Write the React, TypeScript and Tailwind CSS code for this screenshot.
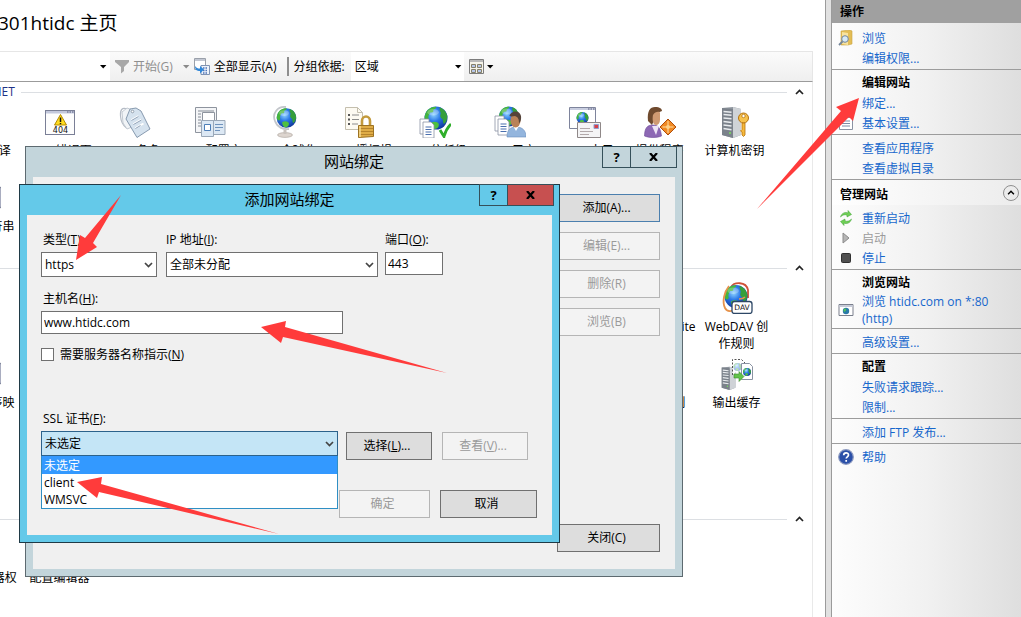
import { useId, type ReactNode } from "react";

function Caret({ muted }: { muted?: boolean }) {
  return (
    <svg className={muted ? "h-1 w-[7px] shrink-0 text-[#8a8a8a]" : "h-1 w-[7px] shrink-0 text-black"} viewBox="0 0 7 4">
      <path d="M0 0h6.4L3.2 3.6z" fill="currentColor" />
    </svg>
  );
}

function Chevron({ className, flip }: { className: string; flip?: boolean }) {
  return (
    <svg className={className} viewBox="0 0 9 6" fill="none" stroke="currentColor" strokeWidth="1.7">
      <path d={flip ? "M1 5 4.5 1.5 8 5" : "M1 1l3.5 3.5L8 1"} />
    </svg>
  );
}

/* ---------- feature icons, all on a 32 x 32 grid ---------- */

function Globe({ cx, cy, r }: { cx: number; cy: number; r: number }) {
  const id = useId();
  const k = r / 12;
  return (
    <g transform={`translate(${cx} ${cy}) scale(${k})`}>
      <defs>
        <radialGradient id={id} cx="0.4" cy="0.35" r="0.75">
          <stop offset="0" stopColor="#8fd4ff" />
          <stop offset="0.4" stopColor="#2b78e8" />
          <stop offset="1" stopColor="#0a2a8c" />
        </radialGradient>
      </defs>
      <circle r="12" fill={`url(#${id})`} />
      <path d="M-11.500-3C-10-9-5-12 0-11.800c1 2-2 2-3 4 1 2-1 2-3 2-1 2-2 3-2 5 1 2 0 4-2 4C-12 2-12.500-1-11.500-3z" fill="#45b53c" />
      <path d="M4-11c4 1 7 5 7.800 9 0 4-1 6-3 8-2 0-1-3-2-5-2-1-3-3-2-5 1-2-2-4-.8-7z" fill="#359f3b" />
      <path d="M-5 5c3-2 8-1 8 2s-2 4-4 4.500-5-4-4-6.500z" fill="#4fc03f" />
      <ellipse cx="-3" cy="-6" rx="6" ry="3.500" fill="#fff" opacity="0.25" />
    </g>
  );
}

function Pages({ x, y }: { x: number; y: number }) {
  return (
    <g transform={`translate(${x} ${y})`} stroke="#8a93a3" strokeWidth="0.8" fill="#fff">
      <path d="M0 0h9v15H0z" />
      <path d="M3 3h8l3 3v13H3z" />
      <path d="M5.500 8h6M5.500 10.500h6M5.500 13h6M5.500 15.500h6" stroke="#4a6fae" strokeWidth="1.200" />
    </g>
  );
}

function Server() {
  return (
    <g>
      <path d="M1 2 12 1l8 2v26l-8 3-11-3z" fill="#8f969e" />
      <path d="M12 1l8 2v26l-8 3z" fill="#cfd3d7" />
      <path d="M1 2l11 1v29L1 29z" fill="#7b828b" />
      <path d="M2.500 5.500l8 .7M2.500 8.500l8 .7M2.500 12l8 .8M2.500 15.500l8 1M2.500 19l8 1M2.500 22.500l8 1.200" stroke="#e9ecef" strokeWidth="1.400" />
      <circle cx="9" cy="27" r="1" fill="#79e05c" />
    </g>
  );
}

type IconName =
  | "blank" | "window" | "error" | "tags" | "pages" | "globeStand" | "lock" | "trust" | "user"
  | "mail" | "provider" | "key" | "dav" | "cache";

function FeatureIcon({ name }: { name: IconName }) {
  return (
    <svg className="h-8 w-8 shrink-0" viewBox="0 0 32 32" fill="none">
      {name === "window" && <rect x="4" y="5" width="28.500" height="21" rx="2" fill="#a9adc0" stroke="#7a7f96" />}
      {name === "error" && (
        <g>
          <rect x="1.500" y="4.500" width="29" height="24" fill="#fdfdfd" stroke="#7a7f96" />
          <path d="M2 5h28v2.500H2z" fill="#c3c8dc" />
          <path d="M23 6h1.500M25.500 6H27M28 6h1.500" stroke="#54597a" />
          <path d="M16.500 8.500 22.500 19h-12z" fill="#ffdc1f" stroke="#b58a00" strokeLinejoin="round" />
          <path d="M16.500 11.500V16M16.500 17v1.300" stroke="#111" strokeWidth="1.500" />
          <text x="16.500" y="27" textAnchor="middle" fontSize="8" fontFamily="DejaVu Sans" fill="#111">404</text>
        </g>
      )}
      {name === "tags" && (
        <g stroke="#8b97a6" strokeWidth="0.900">
          <path d="M8 3C3 1 1 4 1.500 10s3 10 6 12" fill="none" stroke="#b5bcc6" strokeWidth="1.200" />
          <path d="M3 6l5-4 9 3-4 16-5 2-4-6z" fill="#f1f4f7" stroke="#bcc4cd" />
          <path d="M11 3l6-1 5 3 9 18-13 8.500L7 13z" fill="#d5e2ee" stroke="#7c90a6" />
          <circle cx="13.500" cy="5.500" r="1.300" fill="#fff" />
          <path d="M12.500 14l7-4M14.500 18l8-4.500M16.500 22l8-4.500" stroke="#fff" strokeWidth="2" />
          <path d="M12.500 14.500l7-4M14.500 18.500l8-4.500M16.500 22.500l5-3" stroke="#6e86a3" strokeWidth="0.800" />
        </g>
      )}
      {name === "pages" && (
        <g stroke="#8e949e">
          <path d="M1.500 1.500h21v25h-21z" fill="#f4f5f7" />
          <path d="M4 5h16M4 8h3M4 11h3M4 14h3M4 17h3M4 20h3" strokeWidth="1.600" stroke="#a9aeb7" />
          <path d="M8.500 6.500h12v13h-12z" fill="#fff" />
          <path d="M7.500 14.500h12v16h-12zM19.500 14.500h11.500v14H19.500z" fill="#dce8f4" stroke="#9aa8b8" />
          <path d="M10.500 18.500h6v6h-6z" fill="#fff" stroke="#4d7fb8" />
          <path d="M21 18.500h8M21 21.500h8M21 24.500h5" stroke="#6f93bd" />
        </g>
      )}
      {name === "globeStand" && (
        <g>
          <path d="M17 1C8 0 3 8 6 15c2 6 8 9 14 8" stroke="#c3c6cb" strokeWidth="1.800" />
          <ellipse cx="16" cy="29" rx="7.500" ry="2.400" fill="#ddd5cf" stroke="#aaa19b" strokeWidth="0.600" />
          <path d="M14.500 24h3v4h-3z" fill="#c9c2bd" />
          <Globe cx={17.500} cy={12} r={9.800} />
        </g>
      )}
      {name === "lock" && (
        <g>
          <path d="M1.500 1.500h12l5 5v17h-17z" fill="#fdfaf2" stroke="#c4bfae" />
          <path d="M13.500 1.500v5h5" stroke="#c4bfae" />
          <path d="M4 9h2M4 13.500h2M4 18h2" stroke="#555" strokeWidth="2" />
          <path d="M8 9h7M8 13.500h7M8 18h6" stroke="#8c8c8c" />
          <path d="M18 20v-5a4 4.500 0 0 1 8 0v5" stroke="#c39a3c" strokeWidth="2.600" />
          <path d="M14.500 19.500h15v11l-15 1z" fill="#dfac45" stroke="#9c7222" />
          <path d="M15 22.500h14M15 25.500h14M15 28.500h14" stroke="#b5832b" />
          <path d="M16 20v11" stroke="#f8dc93" strokeWidth="1.500" />
        </g>
      )}
      {name === "trust" && (
        <g>
          <Globe cx={17} cy={12} r={11.500} />
          <Pages x={1} y={13} />
          <path d="M21 24l4 6.500Q27 23 32 18" stroke="#2fae2a" strokeWidth="2.800" />
        </g>
      )}
      {name === "user" && (
        <g>
          <Globe cx={15} cy={10.500} r={10} />
          <Pages x={1} y={10} />
          <path d="M13 31c0-7 3-10 9-10s10 3 10 10z" fill="#93b5dd" stroke="#6a8fbe" strokeWidth="0.600" />
          <path d="M19 20l3 5 3-5z" fill="#fff" />
          <ellipse cx="21.500" cy="14.500" rx="5" ry="7" fill="#b98258" />
          <path d="M15.500 10c1-5 10-7 11.500 0 .5 4-1 7-2 7 0-4-1-6-4-7-2 0-4 1-5.500 0z" fill="#55433a" />
        </g>
      )}
      {name === "mail" && (
        <g>
          <path d="M.5 1.500h26v21H.5z" fill="#fff" stroke="#7e849c" />
          <path d="M1 2h25v2H1z" fill="#c9cee0" />
          <path d="M19 3h1.500M21.500 3H23M24 3h1.500" stroke="#54597a" />
          <Globe cx={13.500} cy={12} r={6} />
          <path d="M8.500 16.500h23v15h-23z" fill="#f4f4f5" stroke="#8f8888" />
          <path d="M11 22.500h10M11 25.500h13M11 28.500h9" stroke="#b2a9aa" />
          <path d="M25 18.500h4.500v4H25z" fill="#d6414a" stroke="#8f9fd0" />
        </g>
      )}
      {name === "provider" && (
        <g>
          <path d="M.5 30c0-8 3-11 8-11 6 0 8 3 9 11-5 2-12 2-17 0z" fill="#8d68b4" stroke="#6f4c98" strokeWidth="0.600" />
          <path d="M8 20l4 9 3-9z" fill="#eee5f5" />
          <path d="M4 15C3 5 6 1 11 1s7 2 7 4l-5 2-5 12z" fill="#6f4a2e" />
          <path d="M9 9c2-4 7-4 7-2v7c0 3-2 5-4 5-3 0-4-5-3-10z" fill="#cf9a72" />
          <path d="M24 13l8 8-8 8-8-8z" fill="#f08a24" stroke="#b04d0c" />
          <path d="M24 15v12M18.500 21h11" stroke="#ffe0a8" />
          <circle cx="24" cy="21" r="2" fill="#ffd28a" />
        </g>
      )}
      {name === "key" && (
        <g transform="translate(2 0)">
          <Server />
          <circle cx="22.500" cy="12" r="5" fill="#f6c24d" stroke="#b5720f" />
          <circle cx="22.500" cy="10" r="1.700" fill="#fff" stroke="#b5720f" strokeWidth="0.800" />
          <path d="M21 17h3v12l-1.500 1.500L21 29v-3l-1.500-1 1.500-1.500z" fill="#f6b93b" stroke="#b5720f" strokeWidth="0.800" />
        </g>
      )}
      {name === "dav" && (
        <g>
          <path d="M10 5c3-5 15-6 17 3v8" stroke="#cf5138" strokeWidth="1.800" />
          <Globe cx={15} cy={14.500} r={11.500} />
          <path d="M8 4C3 10 1 20 4 26c2 4 7 4 11 1" stroke="#e6924b" strokeWidth="1.800" />
          <path d="M18 17c2 0 4 0 6-2" stroke="#e6924b" strokeWidth="1.500" />
          <rect x="11" y="19.500" width="20" height="12" rx="2.500" fill="#fff" stroke="#2d4766" strokeWidth="1.300" />
          <text x="21" y="28.300" textAnchor="middle" fontSize="7.500" fontFamily="DejaVu Sans" fill="#111">DAV</text>
        </g>
      )}
      {name === "cache" && (
        <g>
          <g transform="translate(0 8) scale(.72 .75)"><Server /></g>
          <path d="M11.500 17V1.500h9l4 4" fill="#fff" stroke="#555" strokeDasharray="2 1.500" />
          <g opacity="0.4"><Globe cx={16.500} cy={9} r={4} /></g>
          <path d="M20.500 5.500h8l3 3v13h-11z" fill="#fff" stroke="#8a93a3" />
          <Globe cx={26} cy={14} r={4} />
          <path d="M13 16h5v-2.500l5 5-5 5V20h-5z" fill="#63c34a" stroke="#3a8f2b" strokeWidth="0.600" />
        </g>
      )}
    </svg>
  );
}

/* ---------- main pane ---------- */

function Feature({ icon, children }: { icon: IconName; children: ReactNode }) {
  return (
    <li className="flex h-[76px] w-[75px] shrink-0 list-none flex-col items-center gap-1">
      <FeatureIcon name={icon} />
      <span className="w-[70px] text-center leading-[17px]">{children}</span>
    </li>
  );
}

function Group({ title, className, children }: { title: string; className: string; children: ReactNode }) {
  return (
    <section className={className}>
      <h2 className="-ml-8 flex h-5 items-center pr-2 text-[#1e3287]">
        <span className="leading-5">{title}</span>
        <span className="ml-1.5 mr-2 h-px flex-1 bg-[#dcdfe3]" />
        <button type="button" aria-label="折叠" className="text-[#222]">
          <Chevron flip className="h-1.5 w-[9px]" />
        </button>
      </h2>
      <div className="-ml-[53px] pt-1">{children}</div>
    </section>
  );
}

function FeatureRow({ children }: { children: ReactNode }) {
  return <ul className="flex">{children}</ul>;
}

/* ---------- dialogs ---------- */

function CaptionButtons({ danger }: { danger?: boolean }) {
  return (
    <div className="absolute -top-px right-[5px] flex h-[22px] text-[13px] font-bold text-black">
      <button type="button" aria-label="帮助" className="w-[29px] border border-[#35505a] leading-5">?</button>
      <button
        type="button"
        aria-label="关闭"
        className={
          danger
            ? "-ml-px flex w-[47px] items-center justify-center border border-[#35505a] bg-[#c75050]"
            : "-ml-px flex w-[47px] items-center justify-center border border-[#35505a]"
        }
      >
        <svg className="h-2 w-[9px]" viewBox="0 0 9 8" stroke="#000" strokeWidth="2.200"><path d="M1 0l7 8M8 0 1 8" /></svg>
      </button>
    </div>
  );
}

function Button({ className, disabled, focused, children }: { className: string; disabled?: boolean; focused?: boolean; children: ReactNode }) {
  const tone = disabled
    ? "border-[#b5b5b5] bg-[#f3f3f3] text-[#9a9a9a]"
    : focused
      ? "border-[#4b7fae] bg-[#dddddd] text-black"
      : "border-[#707070] bg-[#dddddd] text-black";
  return (
    <button type="button" disabled={disabled} className={`h-7 border pr-1 ${tone} ${className}`}>
      {children}
    </button>
  );
}

function Combo({ id, value, className, open }: { id: string; value: string; className: string; open?: boolean }) {
  return (
    <div className={`relative ${className}`}>
      <select
        id={id}
        defaultValue={value}
        className={
          open
            ? "h-[25px] w-full appearance-none border border-[#2c628b] bg-[#c4e5f6] pl-[3px] leading-[23px]"
            : "h-[25px] w-full appearance-none border border-[#707070] bg-white pl-[3px] leading-[23px]"
        }
      >
        <option>{value}</option>
      </select>
      <Chevron className="pointer-events-none absolute right-1 top-[10px] h-1.5 w-[9px] text-[#444]" />
    </div>
  );
}

/* ---------- actions pane ---------- */

type ActionIconName = "browse" | "basic" | "restart" | "start" | "stop" | "site" | "help";

function ActionIcon({ name }: { name: ActionIconName }) {
  return (
    <svg className="h-4 w-4" viewBox="0 0 16 16" fill="none">
      {name === "browse" && (
        <g>
          <path d="M3 1l9-1 2 1v13l-4 1H3z" fill="#e3bd55" stroke="#c9a445" strokeWidth="0.600" />
          <path d="M4 2l6 1v12l-6-1z" fill="#f7e3a0" />
          <circle cx="7" cy="9" r="3.300" fill="#d6eaf8" stroke="#74859a" />
          <path d="M4.500 11.500 1 15" stroke="#74859a" strokeWidth="1.800" />
        </g>
      )}
      {name === "basic" && (
        <g>
          <path d="M1.500 2.500h13v12h-13z" fill="#fff" stroke="#8a93a3" />
          <path d="M4 6h8M4 8.500h8M4 11h8" stroke="#7d8ca5" />
        </g>
      )}
      {name === "restart" && (
        <g fill="#6fcf55" stroke="#3fa036" strokeWidth="0.500">
          <path d="M2.500 7c1-4 5-5.500 7.500-4V.5L13.500 4.500 9 7V5.300C7 4 4.500 5 2.500 7z" />
          <path d="M13.500 9c-1 4-5 5.500-7.500 4v2.500L2.500 11.500 7 9v1.700c2 1.300 4.500.3 6.500-1.700z" />
        </g>
      )}
      {name === "start" && <path d="M5 3l6 5-6 5z" fill="#b5b5b5" stroke="#8c8c8c" />}
      {name === "stop" && <rect x="3.500" y="3.500" width="9" height="9" rx="1" fill="#505050" stroke="#303030" />}
      {name === "site" && (
        <g>
          <path d="M1 2.500h14v11H1z" fill="#fff" stroke="#7a7f8c" />
          <path d="M1.500 3h13v2h-13z" fill="#c7cbd8" />
          <circle cx="8" cy="9" r="3.200" fill="#2a79a8" />
          <path d="M6 7c1-1 3 0 2 1.500S6 10 5.500 9z" fill="#4fc25a" />
        </g>
      )}
      {name === "help" && (
        <g>
          <circle cx="8" cy="8" r="7.300" fill="#2b50a8" stroke="#8c9ac0" strokeWidth="1.200" />
          <path d="M5.700 6.300C5.700 3 10.600 3.300 10.500 6c0 1.800-2.300 1.900-2.300 3.600M8.200 11v1.700" stroke="#fff" strokeWidth="1.700" />
        </g>
      )}
    </svg>
  );
}

function Action({ icon, muted, children }: { icon?: ActionIconName; muted?: boolean; children: ReactNode }) {
  return (
    <li className="flex min-h-5 items-center leading-[17px]">
      <span className="flex w-[30px] shrink-0 pl-1.5">{icon && <ActionIcon name={icon} />}</span>
      <a href="#" aria-disabled={muted} className={muted ? "text-[#9b9b9b]" : "text-[#1767cc]"}>
        {children}
      </a>
    </li>
  );
}

function ActionBlock({ title, last, children }: { title?: string; last?: boolean; children: ReactNode }) {
  return (
    <section className={last ? "pb-px pt-[3px]" : "border-b border-[#9c9c9c] pb-px pt-[3px]"}>
      {title && <h3 className="pl-[30px] font-bold leading-5 text-black">{title}</h3>}
      <ul>{children}</ul>
    </section>
  );
}

export default function App() {
  return (
    <div className="relative flex min-h-screen overflow-hidden bg-white font-['Open_Sans','Noto_Sans_CJK_SC',sans-serif] text-xs text-black">
      <main className="min-w-0 flex-1 overflow-hidden pr-3">
        <h1 className="-ml-0.5 flex h-[51px] items-center pb-1.5 text-[19px] leading-6">301htidc 主页</h1>
        <div className="flex h-[31px] items-center border-b border-r border-t border-b-[#9b9b9b] border-r-[#e6e6e6] border-t-[#e6e6e6] bg-linear-to-b from-[#fbfbfb] to-[#efefef]">
          <div className="flex h-full w-[110px] items-center justify-end bg-white pr-[3px]"><Caret /></div>
          <button type="button" disabled className="ml-[5px] flex items-center gap-[3px] text-[#8f8f8f]">
            <svg className="h-[15px] w-[15px]" viewBox="0 0 15 15"><path d="M0 1h14v2L9 8v4l-3 2.500V8L0 3z" fill="#a8a8a8" /></svg>
            开始(G)
          </button>
          <span className="ml-[10px] flex"><Caret muted /></span>
          <button type="button" className="ml-1 flex items-center gap-1">
            <svg className="h-[17px] w-4" viewBox="0 0 16 17" fill="none">
              <path d="M.5.500h11v11H.5z" fill="#fff" stroke="#9aa0aa" />
              <path d="M1 1h10v2H1z" fill="#c2c7d2" />
              <path d="M7 7.500h8.500v9H7z" fill="#eef3fa" stroke="#7f93b3" />
              <path d="M9 10h5M9 12.500h5M9 15h5" stroke="#4d74b8" strokeDasharray="1.500 1" strokeWidth="1.300" />
              <path d="M1 8c0 4 2 5 5 5v2.500l4-4-4-3.500v2.500C3.500 10.500 2.500 10 1 8z" fill="#2f86d8" />
            </svg>
            全部显示(A)
          </button>
          <span className="ml-[11px] mr-1 h-[19px] w-0.5 bg-[#8e8e8e]" />
          <label htmlFor="group-by">分组依据:</label>
          <div className="relative ml-1.5 flex h-full w-[113px] items-center bg-white">
            <select id="group-by" className="w-full appearance-none pl-1">
              <option>区域</option>
            </select>
            <span className="pointer-events-none absolute right-0.5 flex"><Caret /></span>
          </div>
          <button type="button" aria-label="视图" className="ml-[5px] flex items-center gap-[3px]">
            <svg className="h-[15px] w-[15px]" viewBox="0 0 15 15" fill="none">
              <path d="M.5.500h14v14H.5z" fill="#f6f4ea" stroke="#7c7c7c" />
              <path d="M1 1h13v2H1z" fill="#b9b9b9" />
              <path d="M2.500 5.500h4v3h-4zM8.500 5.500h4v3h-4zM2.500 10.500h4v3h-4zM8.500 10.500h4v3h-4z" fill="#b6c6e8" stroke="#85806a" />
            </svg>
            <Caret />
          </button>
        </div>
        <div className="overflow-hidden border-r border-[#e9e9e9]">
          <Group title="ASP.NET" className="h-44">
            <FeatureRow>
              <Feature icon="blank">.NET 编译</Feature>
              <Feature icon="error">.NET 错误页</Feature>
              <Feature icon="tags">.NET 角色</Feature>
              <Feature icon="pages">.NET 配置文件</Feature>
              <Feature icon="globeStand">.NET 全球化</Feature>
              <Feature icon="lock">.NET 授权规则</Feature>
              <Feature icon="trust">.NET 信任级别</Feature>
              <Feature icon="user">.NET 用户</Feature>
              <Feature icon="mail">SMTP 电子邮件</Feature>
              <Feature icon="provider">提供程序</Feature>
              <Feature icon="key">计算机密钥</Feature>
            </FeatureRow>
            <FeatureRow>
              <Feature icon="window">连接字符串</Feature>
            </FeatureRow>
          </Group>
          <Group title="IIS" className="h-[251px]">
            <div className="flex justify-between">
              <ul>
                <Feature icon="blank"> </Feature>
                <Feature icon="window">处理程序映射</Feature>
              </ul>
              <div className="mr-[38px] flex">
                <ul>
                  <Feature icon="trust">URL Rewrite</Feature>
                  <Feature icon="lock">授权规则</Feature>
                </ul>
                <ul>
                  <Feature icon="dav">WebDAV 创作规则</Feature>
                  <Feature icon="cache">输出缓存</Feature>
                </ul>
              </div>
            </div>
          </Group>
          <Group title="管理" className="h-[108px]">
            <FeatureRow>
              <Feature icon="blank">IIS 管理器权限</Feature>
              <Feature icon="pages">配置编辑器</Feature>
            </FeatureRow>
          </Group>
        </div>
      </main>

      <aside className="flex w-[196px] shrink-0">
        <div className="w-[7px] border-x border-[#9b9b9b] bg-[#e1e1e1]" />
        <nav aria-label="操作" className="flex-1 bg-linear-to-r from-[#fdfdfd] via-[#f1f1f1] to-[#dedede]">
          <h2 className="h-[23px] bg-[#a0a0a0] pl-2 font-bold leading-[23px]">操作</h2>
          <div className="pt-0.5">
            <ActionBlock>
              <Action icon="browse">浏览</Action>
              <Action>编辑权限...</Action>
            </ActionBlock>
            <ActionBlock title="编辑网站">
              <Action>绑定...</Action>
              <Action icon="basic">基本设置...</Action>
            </ActionBlock>
            <ActionBlock>
              <Action>查看应用程序</Action>
              <Action>查看虚拟目录</Action>
            </ActionBlock>
            <div className="flex h-[25px] items-center justify-between bg-linear-to-r from-white to-[#ececec] pl-2 pr-0.5">
              <h3 className="pt-1 font-bold">管理网站</h3>
              <button type="button" aria-label="折叠" className="flex h-4 w-4 items-center justify-center rounded-full border border-[#8f8f8f] bg-[#ececec]">
                <Chevron flip className="h-[5px] w-2" />
              </button>
            </div>
            <ActionBlock>
              <Action icon="restart">重新启动</Action>
              <Action icon="start" muted>启动</Action>
              <Action icon="stop">停止</Action>
            </ActionBlock>
            <ActionBlock title="浏览网站">
              <Action icon="site">浏览 htidc.com on *:80 (http)</Action>
            </ActionBlock>
            <ActionBlock>
              <Action>高级设置...</Action>
            </ActionBlock>
            <ActionBlock title="配置">
              <Action>失败请求跟踪...</Action>
              <Action>限制...</Action>
            </ActionBlock>
            <ActionBlock>
              <Action>添加 FTP 发布...</Action>
            </ActionBlock>
            <ActionBlock last>
              <Action icon="help">帮助</Action>
            </ActionBlock>
          </div>
        </nav>
      </aside>

      <div role="dialog" aria-label="网站绑定" className="absolute left-[25px] top-[146px] flex h-[431px] w-[658px] flex-col border border-[#5d6a70] bg-[#c3d5db] px-[7px] pb-[7px]">
        <h2 className="h-[30px] text-center text-[15px] leading-[29px]">网站绑定</h2>
        <CaptionButtons />
        <div className="flex flex-1 flex-col items-end justify-between bg-[#f0f0f0] pb-[17px] pr-[15px] pt-[17px]">
          <div className="flex flex-col gap-2.5">
            <Button focused className="w-[103px]">添加(A)...</Button>
            <Button disabled className="w-[103px]">编辑(E)...</Button>
            <Button disabled className="w-[103px]">删除(R)</Button>
            <Button disabled className="w-[103px]">浏览(B)</Button>
          </div>
          <Button className="w-[103px]">关闭(C)</Button>
        </div>
      </div>

      <div role="dialog" aria-label="添加网站绑定" className="absolute left-[19px] top-[184px] flex h-[359px] w-[541px] flex-col border border-[#1f3a46] bg-[#64c9e9] px-[7px] pb-[7px]">
        <h2 className="h-[30px] text-center text-[15px] leading-[29px]">添加网站绑定</h2>
        <CaptionButtons danger />
        <form className="flex-1 bg-[#f0f0f0] pl-3.5 pt-4">
          <div className="flex items-start">
            <div className="mr-[9px] w-[116px]">
              <label htmlFor="type" className="mb-1 block pl-0.5 leading-[17px]">类型(<u>T</u>):</label>
              <Combo id="type" value="https" className="w-full" />
            </div>
            <div className="mr-[7px] w-[212px]">
              <label htmlFor="ip" className="mb-1 block leading-[17px]">IP 地址(<u>I</u>):</label>
              <Combo id="ip" value="全部未分配" className="w-full" />
            </div>
            <div className="w-[58px]">
              <label htmlFor="port" className="mb-1 block leading-[17px]">端口(<u>O</u>):</label>
              <input id="port" defaultValue="443" className="h-[23px] w-full border border-[#707070] bg-white px-0.5" />
            </div>
          </div>
          <label htmlFor="host" className="mb-1 mt-[13px] block pl-0.5 leading-[17px]">主机名(<u>H</u>):</label>
          <input id="host" defaultValue="www.htidc.com" className="block h-[23px] w-[302px] border border-[#707070] bg-white px-0.5" />
          <label className="mt-3 flex items-center gap-1.5 leading-[17px]">
            <input type="checkbox" className="h-[13px] w-[13px] appearance-none border border-[#707070] bg-white" />
            <span>需要服务器名称指示(<u>N</u>)</span>
          </label>
          <label htmlFor="cert" className="mb-1 mt-[47px] block pl-0.5 leading-[17px]">SSL 证书(<u>F</u>):</label>
          <div className="flex items-start">
            <div className="relative mr-2 w-[297px]">
              <Combo open id="cert" value="未选定" className="w-full" />
              <ul role="listbox" aria-label="SSL 证书" className="absolute left-0 top-[25px] z-10 w-full border border-t-0 border-[#2f8fc4] bg-white leading-[17px]">
                <li role="option" aria-selected="true" className="bg-[#3399ff] pl-0.5 pt-px text-white">未选定</li>
                <li role="option" aria-selected="false" className="pl-0.5">client</li>
                <li role="option" aria-selected="false" className="pl-0.5">WMSVC</li>
              </ul>
            </div>
            <div className="flex gap-2.5 pt-px">
              <Button className="w-[86px]">选择(<u>L</u>)...</Button>
              <Button disabled className="w-[86px]">查看(<u>V</u>)...</Button>
            </div>
          </div>
          <div className="mt-[30px] flex justify-end gap-2.5 pr-[15px]">
            <Button disabled className="w-[91px]">确定</Button>
            <Button className="w-[97px]">取消</Button>
          </div>
        </form>
      </div>

      <svg className="pointer-events-none absolute left-0 top-0 z-20 h-[617px] w-[1021px]" viewBox="0 0 1021 617" fill="#ff3b3b">
        <path d="M76 260 80 235 85 238 121 195 93 243 97 247z" />
        <path d="M261 327 286 321 285 327 447 373 283 337 281 343z" />
        <path d="M77 482 102 477 101 484 279 534 99 492 97 498z" />
        <path d="M859 98 836 107 841 111 757 209 849 117 853 121z" />
      </svg>
    </div>
  );
}
